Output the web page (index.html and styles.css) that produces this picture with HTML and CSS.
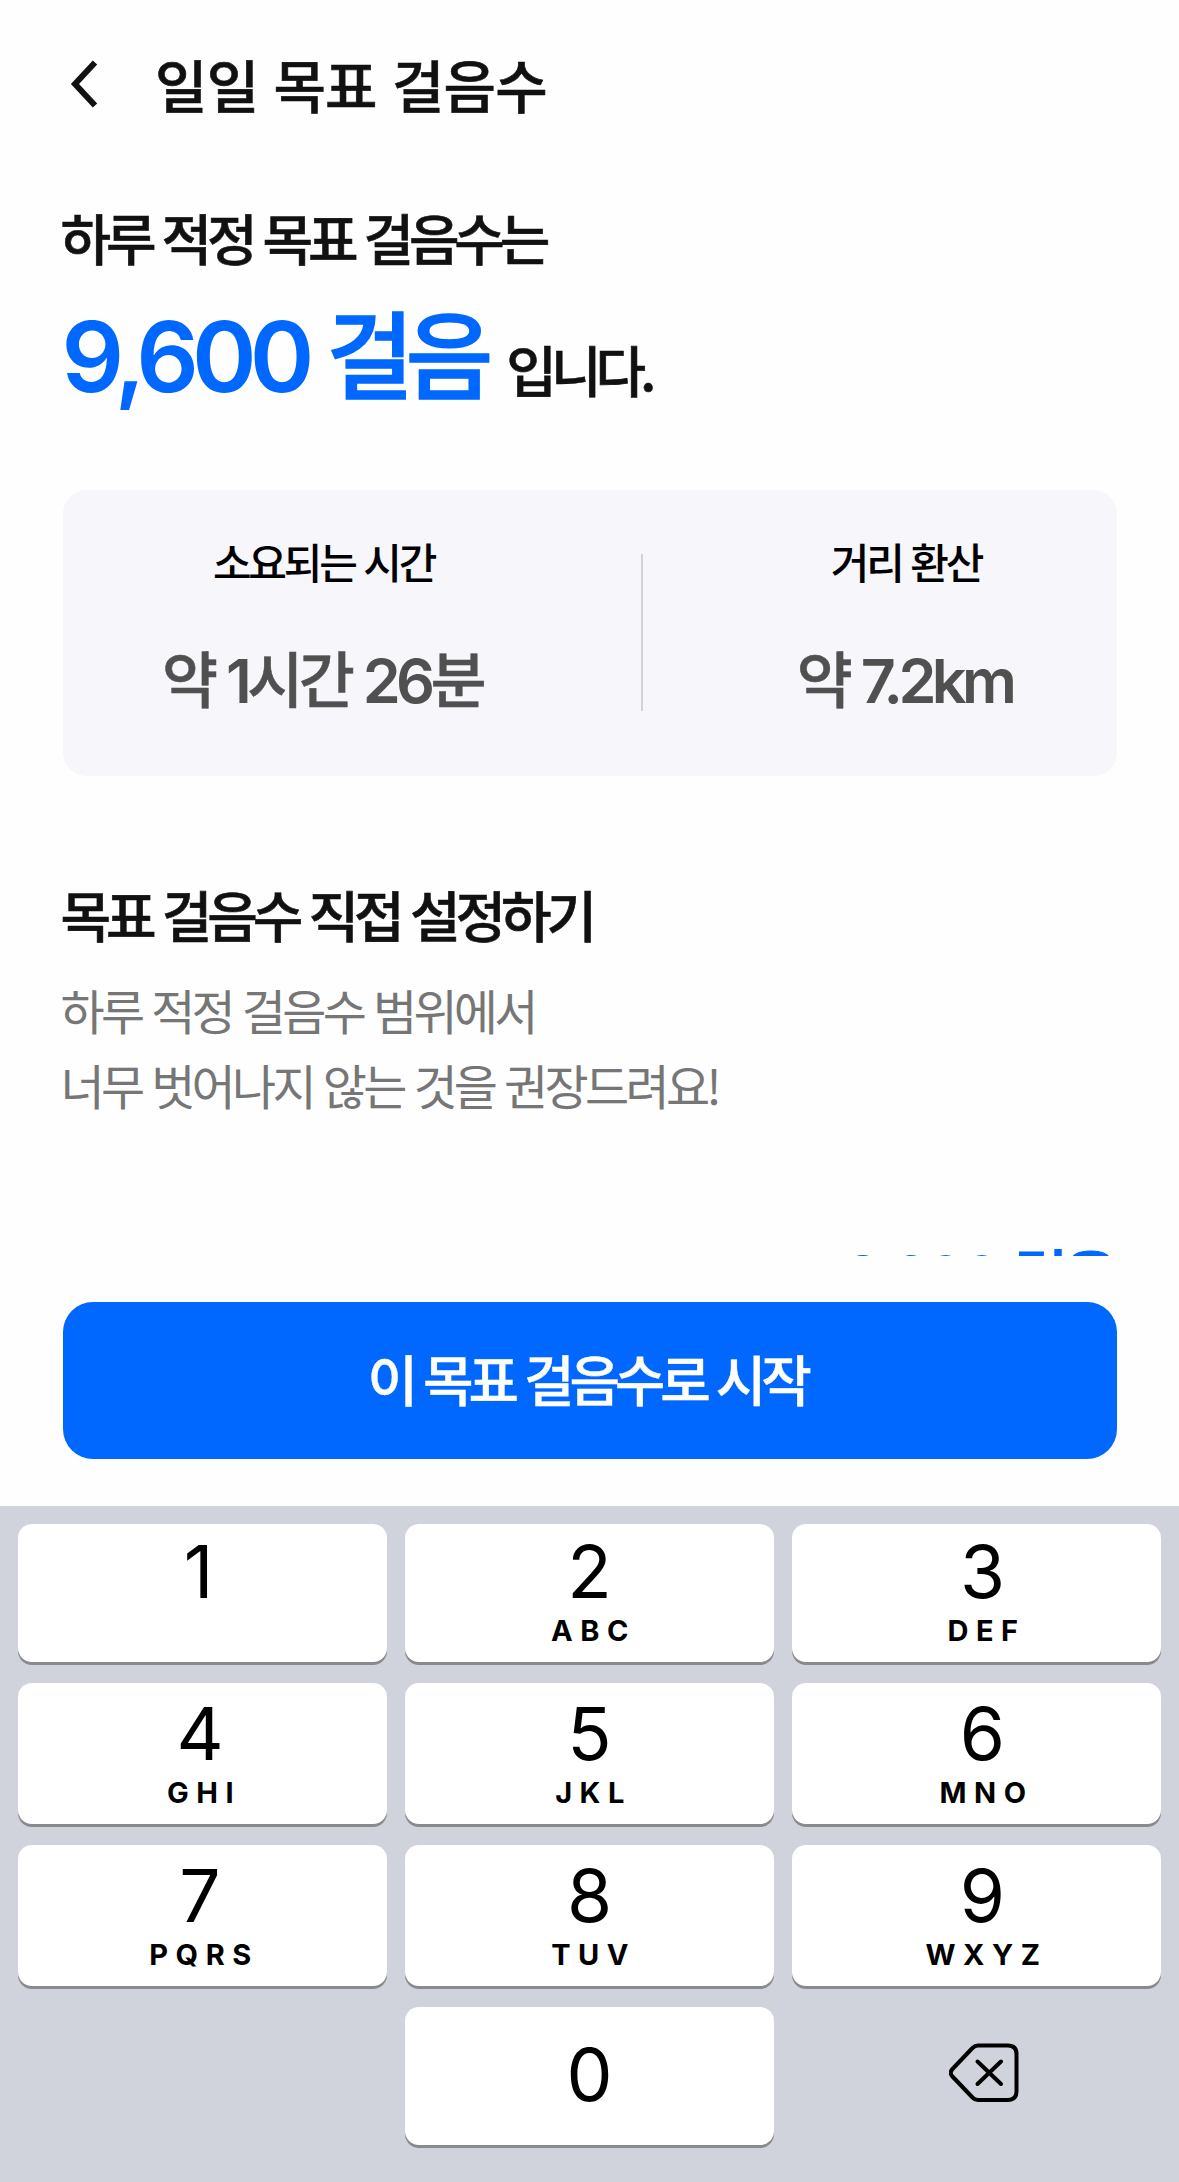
FILE: index.html
```html
<!DOCTYPE html>
<html lang="ko">
<head>
    <meta charset="UTF-8">
    <meta name="viewport" content="width=device-width, initial-scale=1.0">
    <title>일일 목표 걸음수</title>
    <link rel="stylesheet" href="styles.css">
</head>
<body>
    <div class="screen">
        <header class="header">
            <svg class="back" viewBox="0 0 28 48" fill="none" stroke="#111" stroke-width="6">
                <path d="M25 2.5 L5 24 L25 45.5"/>
            </svg>
            <h1 class="header-title">일일 목표 걸음수</h1>
        </header>

        <main class="content">
            <p class="lead">하루 적정 목표 걸음수는</p>
            <p class="goal"><span class="goal-number">9,600</span><span class="goal-unit">걸음</span><span class="goal-end">입니다.</span></p>

            <div class="card">
                <div class="info info-time">
                    <span class="info-label">소요되는 시간</span>
                    <span class="info-value">약 <span class="num">1</span>시간 <span class="num">26</span>분</span>
                </div>
                <div class="divider"></div>
                <div class="info info-distance">
                    <span class="info-label">거리 환산</span>
                    <span class="info-value">약 <span class="num">7.2km</span></span>
                </div>
            </div>

            <h2 class="section-title">목표 걸음수 직접 설정하기</h2>
            <p class="section-text">하루 적정 걸음수 범위에서<br>너무 벗어나지 않는 것을 권장드려요!</p>

            <div class="input-value"><span class="input-number">9,600</span>걸음</div>
        </main>

        <div class="bottom">
            <button class="submit">이 목표 걸음수로 시작</button>
        </div>

        <div class="keyboard">
            <div class="key"><b>1</b></div>
            <div class="key"><b>2</b><small>ABC</small></div>
            <div class="key"><b>3</b><small>DEF</small></div>
            <div class="key"><b>4</b><small>GHI</small></div>
            <div class="key"><b>5</b><small>JKL</small></div>
            <div class="key"><b>6</b><small>MNO</small></div>
            <div class="key"><b>7</b><small>PQRS</small></div>
            <div class="key"><b>8</b><small>TUV</small></div>
            <div class="key"><b>9</b><small>WXYZ</small></div>
            <div class="key key-blank"></div>
            <div class="key key-zero"><b>0</b></div>
            <div class="key key-blank key-delete">
                <svg viewBox="0 0 70 60" fill="none" stroke="#000" stroke-width="4" stroke-linecap="round" stroke-linejoin="round">
                    <path d="M29 2.5 H59 Q67.5 2.5 67.5 11 V48.5 Q67.5 57 59 57 H29 Q26 57 23.5 54.5 L3 33 Q0.5 30 3 26.5 L23.5 5 Q26 2.5 29 2.5 Z"/>
                    <path d="M28.5 18.5 L52 41 M52 18.5 L28.5 41"/>
                </svg>
            </div>
        </div>
    </div>
</body>
</html>
```

FILE: styles.css
```css
* {
    box-sizing: border-box;
    margin: 0;
    padding: 0;
}

body {
    background-color: #fefefe;
    color: #111;
    font-family: "Noto Sans CJK KR", sans-serif;
}

.screen {
    display: flex;
    flex-direction: column;
    width: 1179px;
    height: 2182px;
    overflow: hidden;
}

/* Header */
.header {
    display: flex;
    align-items: center;
    gap: 57px;
    height: 168px;
    padding-left: 70px;
}

.back {
    width: 28px;
    height: 48px;
}

.header-title {
    padding-bottom: 2px;
    font-size: 57px;
    font-weight: 500;
    line-height: 80px;
    letter-spacing: -0.8px;
    -webkit-text-stroke: 0.6px;
}

/* Content */
.content {
    height: 1088px;
    padding: 28px 62.5px 0;
    overflow: hidden;
}

.lead {
    margin-left: -2px;
    font-size: 55px;
    font-weight: 500;
    line-height: 80px;
    letter-spacing: -5.2px;
    -webkit-text-stroke: 0.6px;
}

.goal {
    display: flex;
    align-items: baseline;
    height: 214px;
    margin-left: -1px;
    padding-top: 10px;
    line-height: 130px;
    white-space: nowrap;
}

.goal-number {
    color: #0068ff;
    font-family: Inter, sans-serif;
    font-size: 98px;
    font-weight: 600;
    letter-spacing: -6.9px;
}

.goal-unit {
    margin-left: 19px;
    color: #0068ff;
    font-size: 95px;
    font-weight: 500;
    letter-spacing: -8px;
    -webkit-text-stroke: 1.6px;
}

.goal-end {
    margin-left: 21px;
    font-size: 55px;
    font-weight: 500;
    letter-spacing: -6px;
    -webkit-text-stroke: 0.6px;
}

.card {
    display: flex;
    height: 286px;
    border-radius: 24px;
    background-color: #f6f6fb;
}

.info {
    display: flex;
    flex-direction: column;
    align-items: center;
    padding-top: 41px;
    gap: 51px;
}

.info-time {
    width: 522px;
    margin-right: 56px;
}

.info-distance {
    flex: 1;
    padding-left: 53px;
}

.info-label {
    color: #000;
    font-size: 42px;
    font-weight: 500;
    line-height: 60px;
    letter-spacing: -3.2px;
}

.info-value {
    padding-right: 3px;
    color: #505050;
    font-size: 61px;
    font-weight: 500;
    line-height: 70px;
    letter-spacing: -4.6px;
    -webkit-text-stroke: 0.5px;
}

.num {
    font-family: Inter, sans-serif;
    font-weight: 600;
    -webkit-text-stroke: 0;
}

.divider {
    width: 2px;
    height: 157px;
    margin-top: 64px;
    background-color: #d0d3dc;
}

.section-title {
    margin: 97px 0 0 -2px;
    font-size: 55px;
    font-weight: 500;
    line-height: 80px;
    letter-spacing: -5.1px;
    -webkit-text-stroke: 0.6px;
}

.section-text {
    margin: 19px 0 0 -2px;
    color: #767676;
    font-size: 48px;
    font-weight: 400;
    line-height: 75px;
    letter-spacing: -3.7px;
}

/* The lower part of this row stays under the button area */
.input-value {
    margin: 107px 3px 0 0;
    color: #0068ff;
    font-size: 60px;
    font-weight: 500;
    line-height: 90px;
    letter-spacing: -5px;
    text-align: right;
    -webkit-text-stroke: 1px;
}

.input-number {
    margin-right: 15px;
    font-family: Inter, sans-serif;
    font-size: 61px;
    font-weight: 600;
    letter-spacing: -4px;
    -webkit-text-stroke: 0;
}

/* Bottom button */
.bottom {
    height: 250px;
    padding: 46px 62.5px 0;
}

.submit {
    width: 100%;
    height: 157px;
    padding: 0 5px 7px 0;
    border: 0;
    border-radius: 30px;
    background-color: #0068ff;
    color: #fff;
    font-family: inherit;
    font-size: 55px;
    font-weight: 500;
    letter-spacing: -5.2px;
    -webkit-text-stroke: 0.4px;
}

/* Number keyboard */
.keyboard {
    display: grid;
    grid-template-columns: repeat(3, 369px);
    grid-template-rows: 138px 141px 141px 138px;
    gap: 21px 18px;
    flex: 1;
    align-content: start;
    padding: 18px;
    background-color: #d0d3db;
    color: #000;
    font-family: Inter, sans-serif;
}

.key {
    display: flex;
    flex-direction: column;
    align-items: center;
    justify-content: flex-end;
    padding-bottom: 13px;
    border-radius: 14px;
    background-color: #fff;
    box-shadow: 0 3px 0 #898a8d;
}

.key:nth-child(3n) {
    padding-left: 12px;
}

.key:nth-child(3n + 1) {
    padding-right: 5px;
}

.key b {
    height: 83px;
    font-size: 73px;
    font-weight: 400;
    line-height: 84px;
}

.key small {
    height: 36px;
    padding-left: 8px;
    font-size: 29px;
    font-weight: 700;
    line-height: 36px;
    letter-spacing: 7.5px;
}

.key:first-child b {
    margin-bottom: 36px;
    padding-right: 3px;
}

.key-zero {
    justify-content: center;
    padding: 0 0 3px;
}

.key-blank {
    background: none;
    box-shadow: none;
}

.key-delete.key-blank {
    justify-content: flex-start;
    padding: 36px 0 0 14px;
}

.key-delete svg {
    width: 70px;
    height: 60px;
}
```
